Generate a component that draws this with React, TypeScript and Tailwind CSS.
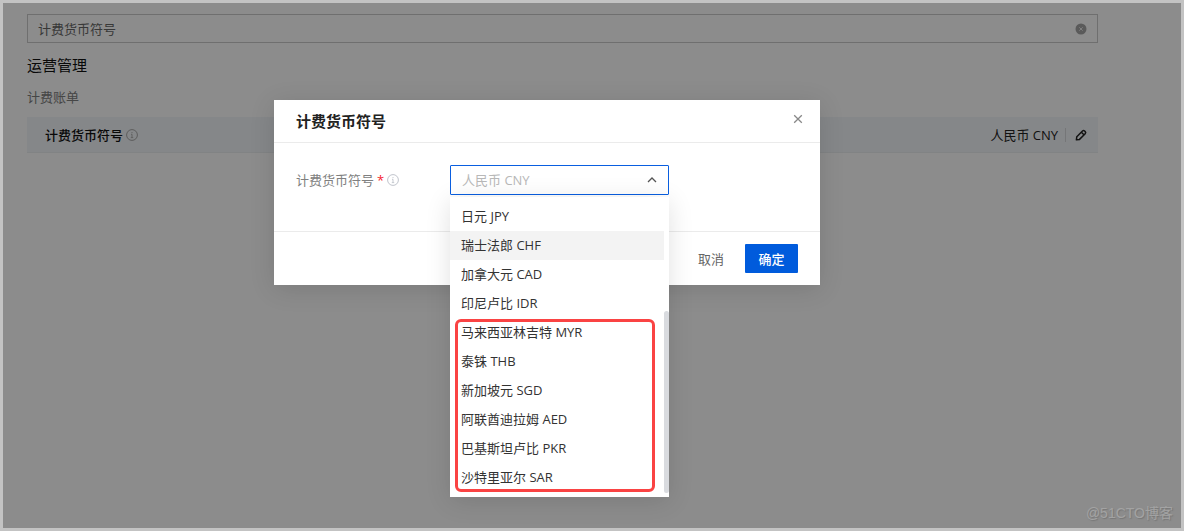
import { useState } from "react";
import type { MouseEvent } from "react";

interface Currency {
  code: string;
  name: string;
}

const CURRENCIES: Currency[] = [
  { code: "JPY", name: "日元" },
  { code: "CHF", name: "瑞士法郎" },
  { code: "CAD", name: "加拿大元" },
  { code: "IDR", name: "印尼卢比" },
  { code: "MYR", name: "马来西亚林吉特" },
  { code: "THB", name: "泰铢" },
  { code: "SGD", name: "新加坡元" },
  { code: "AED", name: "阿联酋迪拉姆" },
  { code: "PKR", name: "巴基斯坦卢比" },
  { code: "SAR", name: "沙特里亚尔" },
];

function InfoIcon({ className }: { className: string }) {
  return (
    <svg viewBox="0 0 12 12" fill="none" stroke="currentColor" className={className} aria-hidden="true">
      <circle cx="6" cy="6" r="5.4" />
      <path d="M6 3v1.1M5 5.3h1v3M4.8 8.6h2.4" strokeWidth={0.9} />
    </svg>
  );
}

function SettingsPage() {
  const [query, setQuery] = useState("计费货币符号");

  return (
    <main className="pl-6 pr-[83px] pt-[11px]">
      <div className="flex h-[29px] items-center border border-[#cacaca] pl-[10px] pr-[10px]">
        <input
          type="text"
          aria-label="搜索"
          value={query}
          onChange={(event) => setQuery(event.target.value)}
          className="min-w-0 flex-1 bg-transparent text-[13px] leading-5 text-[#666] outline-none"
        />
        <button type="button" aria-label="清除" onClick={() => setQuery("")}>
          <svg viewBox="0 0 12 12" className="h-3 w-3">
            <circle cx="6" cy="6" r="5.5" fill="#a5a5a5" />
            <path d="M4.3 4.3l3.4 3.4M7.7 4.3L4.3 7.7" stroke="#eee" strokeWidth={0.9} />
          </svg>
        </button>
      </div>

      <h1 className="mt-[10px] text-[15px] leading-6 text-[#111]">运营管理</h1>
      <h2 className="mt-[10px] text-[13px] leading-5 text-[#808080]">计费账单</h2>

      <div className="mt-[10px] flex h-9 items-center border-b border-[#eceef0] bg-[#f3f6f9] pl-[18px] pr-[10px] text-[13px] leading-5">
        <span className="font-medium text-[#111]">计费货币符号</span>
        <InfoIcon className="ml-[3px] h-3 w-3 text-[#a8a8a8]" />
        <span className="ml-auto text-[#222]">人民币 CNY</span>
        <span className="ml-[7px] h-[14px] w-px bg-[#d5d8db]" />
        <button type="button" aria-label="编辑" className="ml-2 text-[#222]">
          <svg viewBox="0 0 14 14" fill="none" stroke="currentColor" strokeWidth={1.5} strokeLinejoin="round" className="h-[14px] w-[14px]">
            <path d="M2.4 11.8l.4-3.1 5.7-5.7a1.5 1.5 0 0 1 2.1 0l.6.6a1.5 1.5 0 0 1 0 2.1l-5.7 5.7zM7.4 4.3l2.5 2.5" />
          </svg>
        </button>
      </div>
    </main>
  );
}

function CurrencySelect() {
  const [open, setOpen] = useState(true);
  const [value, setValue] = useState("CNY");
  const [active, setActive] = useState("CHF");

  // The list below stands in for the native popup.
  const toggle = (event: MouseEvent) => {
    event.preventDefault();
    setOpen(!open);
  };

  const choose = (code: string) => {
    setValue(code);
    setOpen(false);
  };

  return (
    <div className="relative w-[219px]">
      <select
        id="currency"
        value={value}
        onMouseDown={toggle}
        onChange={(event) => setValue(event.target.value)}
        className="block h-[30px] w-full appearance-none rounded-[1px] border border-[#0a5fe0] bg-white pl-[11px] pr-8 text-[13px] leading-5 text-[#b8b8b8] outline-none"
      >
        <option value="CNY">人民币 CNY</option>
        {CURRENCIES.map((item) => (
          <option key={item.code} value={item.code}>
            {item.name} {item.code}
          </option>
        ))}
      </select>
      <svg
        viewBox="0 0 10 6"
        fill="none"
        stroke="currentColor"
        strokeWidth={1.3}
        className="pointer-events-none absolute right-3 top-3 h-[6px] w-[10px] text-[#555]"
      >
        <path d="M1 5l4-4 4 4" />
      </svg>

      {open && (
        <div className="absolute inset-x-0 top-8 z-10 bg-white pb-[5px] pt-[5px] shadow-[0_4px_24px_rgba(0,0,0,0.12)]">
          <ul role="listbox" aria-label="计费货币符号" className="mr-[5px]">
            {CURRENCIES.map((item) => (
              <li key={item.code} role="option" aria-selected={item.code === value}>
                <button
                  type="button"
                  onClick={() => choose(item.code)}
                  onMouseEnter={() => setActive(item.code)}
                  className={`block h-[29px] w-full pl-[11px] text-left text-[13px] leading-[29px] text-[#333] ${
                    item.code === active ? "bg-[#f3f3f3]" : ""
                  }`}
                >
                  {item.name} {item.code}
                </button>
              </li>
            ))}
          </ul>
          <span className="absolute bottom-1 right-0 h-[182px] w-[5px] rounded-full bg-[#d9dbdf]" />
          <span className="pointer-events-none absolute bottom-[5px] left-[5px] right-[14px] h-[173px] rounded-md border-[3px] border-[#fa4343]" />
        </div>
      )}
    </div>
  );
}

function CurrencyDialog() {
  return (
    <div
      role="dialog"
      aria-modal="true"
      aria-labelledby="dialog-title"
      className="w-[546px] bg-white shadow-[0_4px_24px_rgba(0,0,0,0.12)]"
    >
      <header className="flex h-[43px] items-center border-b border-[#ebebeb] pl-[22px] pr-[17px]">
        <h2 id="dialog-title" className="text-[15px] font-bold leading-6 text-[#222]">
          计费货币符号
        </h2>
        <button type="button" aria-label="关闭" className="mb-1 ml-auto text-[#888]">
          <svg viewBox="0 0 10 10" fill="none" stroke="currentColor" strokeWidth={1.3} className="h-[10px] w-[10px]">
            <path d="M1.2 1.2l7.6 7.6M8.8 1.2L1.2 8.8" />
          </svg>
        </button>
      </header>

      <div className="flex h-[88px] items-start px-[22px] pt-[22px]">
        <label htmlFor="currency" className="flex h-[29px] w-[154px] items-center text-[13px] leading-5 text-[#808080]">
          计费货币符号
          <span className="ml-[3px] text-[#f5222d]">*</span>
          <InfoIcon className="ml-[3px] h-3 w-3 text-[#c0c4cc]" />
        </label>
        <CurrencySelect />
      </div>

      <footer className="flex h-[54px] items-center justify-end gap-2 border-t border-[#ebebeb] pr-[22px] text-[13px] leading-5">
        <button type="button" className="h-[29px] px-[13px] text-[#666]">
          取消
        </button>
        <button type="button" className="h-[29px] w-[53px] rounded-[1px] bg-[#005bdc] font-medium text-white">
          确定
        </button>
      </footer>
    </div>
  );
}

export default function App() {
  return (
    <div className="relative min-h-screen border-[3px] border-[#c3c3c3] bg-white font-['Open_Sans','Noto_Sans_CJK_SC',sans-serif]">
      <SettingsPage />
      <div className="absolute inset-0 flex items-start justify-center bg-black/45 pr-[90px] pt-[97px]">
        <CurrencyDialog />
      </div>
      <span className="absolute bottom-[5px] right-2 font-['Liberation_Sans','Noto_Sans_CJK_SC',sans-serif] text-sm text-[#a3a3a3] [text-shadow:1px_1px_1px_#777]">
        @51CTO博客
      </span>
    </div>
  );
}
